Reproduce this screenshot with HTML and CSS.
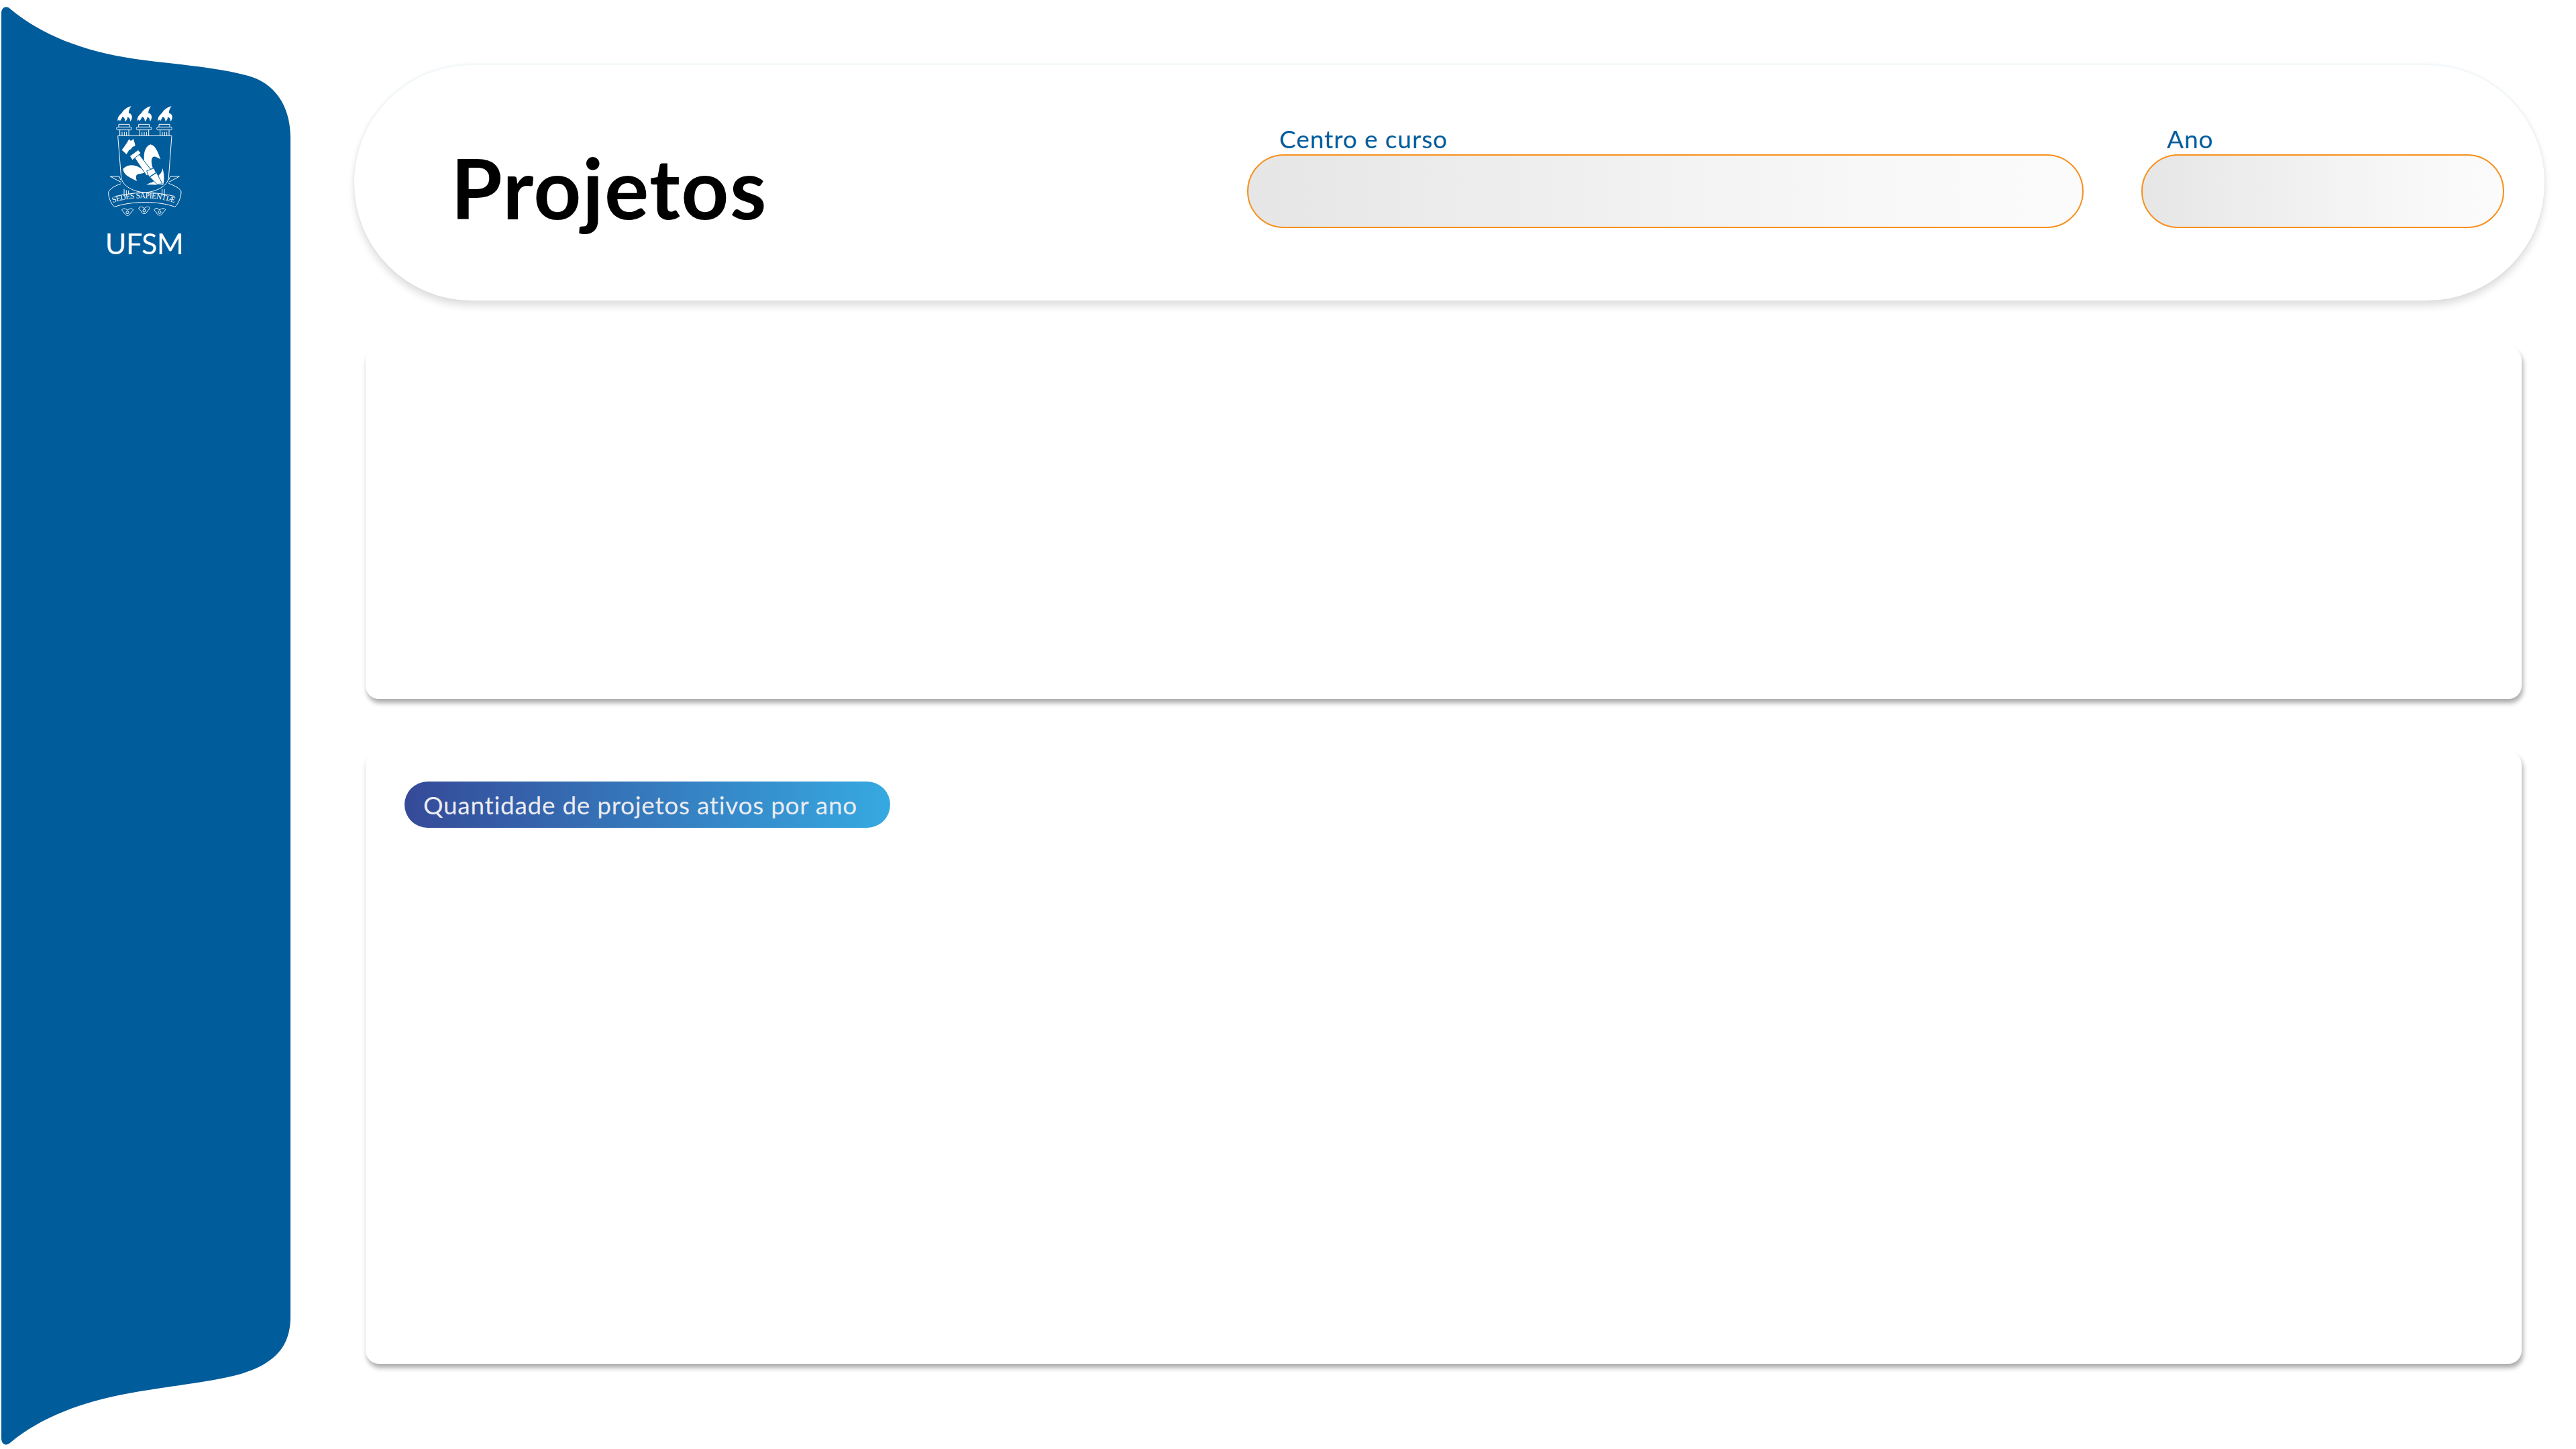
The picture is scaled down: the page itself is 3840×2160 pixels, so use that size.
FILE: index.html
```html
<!DOCTYPE html>
<html lang="pt-BR">
<head>
  <meta charset="UTF-8">
  <title>Projetos</title>
  <link rel="stylesheet" href="styles.css">
</head>
<body>

  <aside class="lateral">
    <svg class="lateral-forma" viewBox="0 0 431 2144">
      <path fill="#005c9b" d="M0 10 C0 1 7 -2 13 3 C60 42 120 66 200 78 C260 86 320 90 368 103 C405 113 431 145 431 195 L431 1953 C431 2000 405 2025 350 2040 C300 2052 250 2056 190 2067 C120 2080 60 2102 14 2140 C8 2146 0 2144 0 2134 Z"/>
    </svg>

    <div class="logo">
      <svg class="brasao" viewBox="0 0 510 555">
        <!-- chamas -->
        <g fill="#fff">
          <path id="chama" d="M137 122 C133 105 145 95 155 85 C160 75 175 60 197 55 C188 68 184 78 186 88 C192 85 198 92 200 100 C202 110 197 118 193 124 C193 112 188 104 180 104 C180 112 176 118 170 124 C170 112 165 104 157 102 C155 110 150 116 146 122 C144 115 142 112 137 122 Z"/>
          <use href="#chama" x="88"/>
          <use href="#chama" x="180"/>
        </g>
        <!-- colunas -->
        <g fill="none" stroke="#fff" stroke-width="3">
          <g id="coluna">
            <rect x="131" y="148" width="68" height="13" rx="6"/>
            <path d="M141 136 H189 V148 M141 136 V148 M146 161 V187 M156 170 V187 M166 170 V187 M176 170 V187 M186 161 V187"/>
          </g>
          <use href="#coluna" x="89"/>
          <use href="#coluna" x="180"/>
          <!-- escudo -->
          <path d="M137 187 H378 L364 375 C358 415 305 438 258 441 C210 438 160 415 152 375 Z"/>
          <!-- faixa -->
          <path d="M152 395 L103 369 H143 L150 385 M364 395 L412 369 H372 L364 385"/>
          <path d="M150 402 C120 412 95 428 95 442 C95 470 112 498 122 505 C200 478 320 478 392 505 C405 495 420 465 420 438 C420 425 390 410 364 400"/>
          <path d="M165 455 V425 M175 455 V430 M185 448 V432 M335 448 V425 M345 455 V425"/>
          <path d="M125 458 C190 444 240 441 260 441 C300 441 350 448 392 458"/>
        </g>
        <!-- flor de lis -->
        <g fill="#fff">
          <path d="M155 250 C170 232 175 222 188 201 C190 212 200 212 206 200 C208 210 216 222 214 235 C206 232 198 240 196 248 C188 246 184 258 176 270 C168 262 160 258 155 250 Z"/>
          <path d="M264 335 C248 290 250 240 282 226 C308 230 318 268 328 292 C312 284 300 276 292 284 C284 296 288 315 294 334 Z"/>
          <path d="M262 352 C235 320 190 305 160 335 C162 365 195 375 222 390 C215 370 218 358 235 358 Z"/>
          <path d="M296 392 L322 362 C330 355 335 345 337 332 C345 360 345 385 340 406 C320 408 290 404 264 406 C272 400 285 398 296 392 Z"/>
        </g>
        <!-- facho -->
        <g class="facho">
          <path d="M212 286 L232 270 L290 346 L266 366 Z"/>
          <path d="M190 278 L228 250 L240 265 L202 296 Z"/>
          <path d="M266 344 L298 332 L308 352 L276 372 Z"/>
          <path d="M280 372 L310 352 L336 402 L312 404 Z"/>
        </g>
        <defs>
          <path id="lema" d="M114 486 C200 458 310 458 398 490"/>
        </defs>
        <text class="lema-texto" fill="#fff"><textPath href="#lema" textLength="280">SEDES SAPIENTIÆ</textPath></text>
        <!-- ornamentos -->
        <g fill="none" stroke="#fff" stroke-width="3">
          <g id="ornamento">
            <path d="M155 518 C165 510 170 512 180 520 C190 512 198 510 206 518 C202 526 194 530 192 536 C188 546 172 546 168 536 C166 530 158 526 155 518 Z"/>
            <circle cx="180" cy="530" r="6"/>
          </g>
          <use href="#ornamento" x="75" y="-8"/>
          <use href="#ornamento" x="144" y="-1"/>
        </g>
      </svg>
      <span class="logo-nome">UFSM</span>
    </div>
  </aside>

  <main class="conteudo">
    <header class="cabecalho">
      <h1 class="titulo">Projetos</h1>
      <div class="filtros">
        <div class="filtro filtro-curso">
          <label class="filtro-rotulo">Centro e curso</label>
          <div class="filtro-campo"></div>
        </div>
        <div class="filtro filtro-ano">
          <label class="filtro-rotulo">Ano</label>
          <div class="filtro-campo"></div>
        </div>
      </div>
    </header>

    <section class="cartao cartao-topo"></section>

    <section class="cartao cartao-grafico">
      <span class="etiqueta">Quantidade de projetos ativos por ano</span>
    </section>
  </main>

</body>
</html>
```

FILE: styles.css
```css
body {
  margin: 0;
  height: 2160px;
  display: flex;
  overflow: hidden;
  background-color: #fff;
  font-family: 'Lato', 'Open Sans', sans-serif;
}

.lateral {
  position: relative;
  flex: none;
  width: 433px;
  padding: 10px 0 0 2px;
  box-sizing: border-box;
}

.lateral-forma {
  display: block;
  width: 431px;
  height: 2144px;
}

.logo {
  position: absolute;
  top: 140px;
  left: 130px;
  width: 170px;
  display: flex;
  flex-direction: column;
  align-items: center;
}

.brasao {
  display: block;
  width: 170px;
  height: 185px;
}

.facho path {
  fill: #fff;
  stroke: #005c9b;
  stroke-width: 3;
}

.lema-texto {
  font-family: 'Liberation Serif', serif;
  font-size: 35px;
}

.logo-nome {
  margin-top: 13px;
  color: #fff;
  font-size: 43px;
  line-height: 50px;
  font-weight: 400;
  letter-spacing: -0.5px;
}

.conteudo {
  margin-left: 95px;
  padding-top: 97px;
}

.cabecalho {
  width: 3265px;
  height: 351px;
  display: flex;
  justify-content: space-between;
  border-radius: 175px;
  background-color: #fff;
  box-shadow: 0 8px 12px rgba(0, 0, 0, 0.13), 0 -1px 4px rgba(190, 215, 230, 0.35);
}

.titulo {
  margin: 0;
  padding: 112px 0 0 144px;
  font-size: 124px;
  line-height: 140px;
  font-weight: 700;
  letter-spacing: 1.5px;
  color: #000;
}

.filtros {
  display: flex;
  gap: 86px;
  padding: 89px 60px 0 0;
}

.filtro-curso {
  width: 1247px;
}

.filtro-ano {
  width: 541px;
}

.filtro-rotulo {
  display: block;
  margin-bottom: 3px;
  padding-left: 48px;
  font-size: 37px;
  line-height: 41px;
  letter-spacing: 0.9px;
  color: #005c9b;
}

.filtro-ano .filtro-rotulo {
  padding-left: 38px;
}

.filtro-campo {
  height: 110px;
  box-sizing: border-box;
  border: 2px solid #f7901e;
  border-radius: 55px;
  background: linear-gradient(to right, #e6e6e6, #f8f8f8 75%, #fbfbfb);
}

.cartao {
  margin-left: 17px;
  width: 3214px;
  box-sizing: border-box;
  border-radius: 20px;
  background-color: #fff;
  box-shadow: 2px 6px 7px rgba(0, 0, 0, 0.33);
}

.cartao-topo {
  margin-top: 69px;
  height: 525px;
}

.cartao-grafico {
  margin-top: 78px;
  height: 913px;
  padding: 45px 58px;
}

.etiqueta {
  display: inline-block;
  height: 69px;
  padding: 0 49px 0 28px;
  border-radius: 35px;
  background: linear-gradient(to right, #354a98, #36a9e1);
  color: #ececf1;
  font-size: 37px;
  letter-spacing: 0.7px;
  line-height: 69px;
}
```
